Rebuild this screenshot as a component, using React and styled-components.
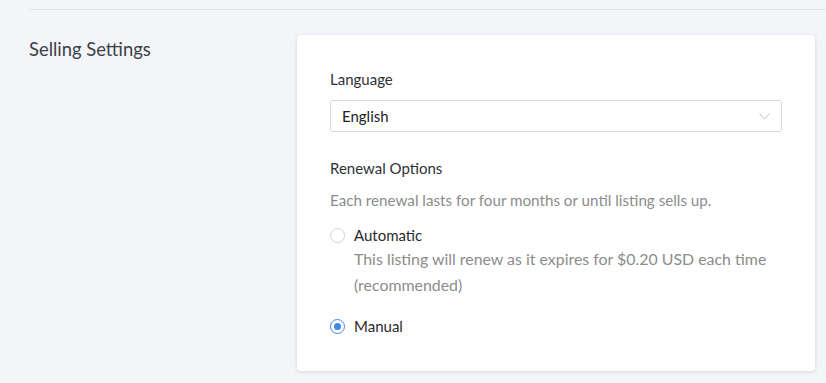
import React from "react";
import styled, { createGlobalStyle } from "styled-components";

const Global = createGlobalStyle`
  html, body { margin: 0; padding: 0; background: #f4f5f9; }
  body { font-family: Lato, "Noto Sans", sans-serif; color: #333; }
  * { box-sizing: border-box; }
`;

const Page = styled.div`
  width: 826px;
  height: 383px;
  padding: 9px 0 0 29px;
  overflow: hidden;
`;

const Divider = styled.hr`
  margin: 0;
  border: 0;
  border-top: 1px solid #e2e4ea;
`;

const Section = styled.div`
  display: grid;
  grid-template-columns: 268px 518px;
  margin-top: 25px;
`;

const SectionTitle = styled.h2`
  margin: 2px 0 0;
  font-size: 18.4px;
  font-weight: 400;
  color: #3b3f48;
  line-height: 24px;
`;

const Card = styled.div`
  background: #fff;
  border-radius: 4px;
  box-shadow: 0 1px 4px rgba(40, 45, 70, 0.14);
  padding: 34px 33px 32px;
  height: 336px;
`;

const Label = styled.div`
  font-size: 15px;
  line-height: 20px;
  color: #2e3138;
  margin-bottom: ${(p) => p.$mb || 0}px;
`;

const SelectBox = styled.div`
  display: flex;
  align-items: center;
  justify-content: space-between;
  height: 32px;
  border: 1px solid #d7d8dc;
  border-radius: 2px;
  padding: 0 11px;
  font-size: 15px;
  color: #222;
  margin-bottom: 26px;
`;

const Help = styled.div`
  font-size: 15.2px;
  line-height: 26px;
  color: #8c8c8c;
  margin-top: 9px;
`;

const RadioRow = styled.div`
  display: grid;
  grid-template-columns: 24px 1fr;
  align-items: center;
  margin-top: ${(p) => p.$mt || 0}px;
  font-size: 15px;
  line-height: 26px;
  color: #2a2a2a;
`;

const Radio = styled.span`
  width: 15px;
  height: 15px;
  border-radius: 50%;
  border: ${(p) => (p.$checked ? "1.5px solid #3f87f5" : "1px solid #d2d3d6")};
  display: flex;
  align-items: center;
  justify-content: center;
  &::after {
    content: "";
    width: 7px;
    height: 7px;
    border-radius: 50%;
    background: ${(p) => (p.$checked ? "#3f87f5" : "transparent")};
  }
`;

const RadioHelp = styled.div`
  grid-column: 2;
  color: #8c8c8c;
  font-size: 15.9px;
  line-height: 26px;
  margin-top: -2px;
`;

const Chevron = () => (
  <svg width="11" height="7" viewBox="0 0 11 7" fill="none">
    <path d="M0.5 0.5 L5.5 6 L10.5 0.5" stroke="#b9bbc0" strokeWidth="1" />
  </svg>
);

export default function App() {
  return (
    <Page>
      <Global />
      <Divider />
      <Section>
        <SectionTitle>Selling Settings</SectionTitle>
        <Card>
          <Label $mb={11}>Language</Label>
          <SelectBox>
            <span>English</span>
            <Chevron />
          </SelectBox>
          <Label>Renewal Options</Label>
          <Help>Each renewal lasts for four months or until listing sells up.</Help>
          <RadioRow $mt={9}>
            <Radio />
            <span>Automatic</span>
            <RadioHelp>
              This listing will renew as it expires for $0.20 USD each time
              <br />
              (recommended)
            </RadioHelp>
          </RadioRow>
          <RadioRow $mt={15}>
            <Radio $checked />
            <span>Manual</span>
          </RadioRow>
        </Card>
      </Section>
    </Page>
  );
}
